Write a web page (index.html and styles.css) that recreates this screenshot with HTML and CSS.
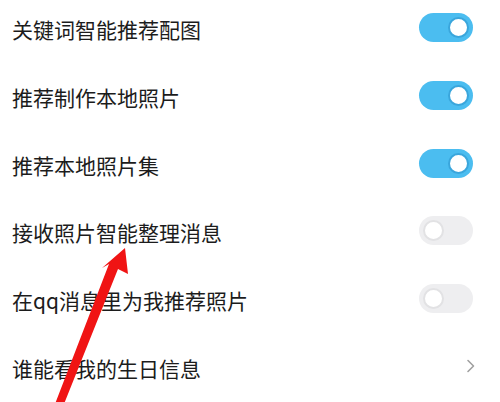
FILE: index.html
```html
<!DOCTYPE html>
<html lang="zh-CN">
<head>
<meta charset="utf-8">
<link rel="stylesheet" href="styles.css">
</head>
<body>
<div class="list">
  <div class="row"><span class="label">关键词智能推荐配图</span><span class="switch on"><span class="knob"></span></span></div>
  <div class="row"><span class="label">推荐制作本地照片</span><span class="switch on"><span class="knob"></span></span></div>
  <div class="row"><span class="label">推荐本地照片集</span><span class="switch on"><span class="knob"></span></span></div>
  <div class="row"><span class="label">接收照片智能整理消息</span><span class="switch off"><span class="knob"></span></span></div>
  <div class="row"><span class="label">在qq消息里为我推荐照片</span><span class="switch off"><span class="knob"></span></span></div>
  <div class="row"><span class="label">谁能看我的生日信息</span>
    <svg class="chev" width="10" height="14" viewBox="0 0 10 14"><path d="M2 1.5 L7.5 7 L2 12.5" fill="none" stroke="#a0a0a0" stroke-width="1.6" stroke-linecap="round" stroke-linejoin="round"/></svg>
  </div>
</div>
<svg class="arrow" width="500" height="402" viewBox="0 0 500 402">
  <polygon points="125,248 128,274 118,269 64,404 55,404 109,264 102,268" fill="#f01414"/>
</svg>
</body>
</html>
```
FILE: styles.css
```css
html, body {
  margin: 0;
  padding: 0;
  background: #ffffff;
}
body {
  width: 500px;
  height: 402px;
  overflow: hidden;
  position: relative;
  font-family: "Noto Sans CJK SC", "Noto Sans", sans-serif;
}
.list {
  margin-top: -6px;
  display: flex;
  flex-direction: column;
}
.row {
  height: 67.7px;
  display: flex;
  align-items: center;
  justify-content: space-between;
  padding: 0 27px 0 12px;
}
.label {
  font-size: 21px;
  color: #1c1c1c;
  line-height: 1;
  position: relative;
  top: 2px;
}
.switch {
  width: 54px;
  height: 29px;
  border-radius: 15px;
  display: flex;
  align-items: center;
  box-sizing: border-box;
  padding: 0 4px;
}
.switch.on {
  background: #4bbdf0;
  justify-content: flex-end;
}
.switch.off {
  background: #eeeef0;
  justify-content: flex-start;
}
.knob {
  width: 21px;
  height: 21px;
  border-radius: 50%;
  background: #ffffff;
  box-sizing: border-box;
}
.switch.on .knob {
  border: 2px solid #3aa6dc;
}
.switch.off .knob {
  border: 2px solid #e2e2e4;
}
.chev {
  margin-right: -3px;
}
.arrow {
  position: absolute;
  left: 0;
  top: 0;
}
```
